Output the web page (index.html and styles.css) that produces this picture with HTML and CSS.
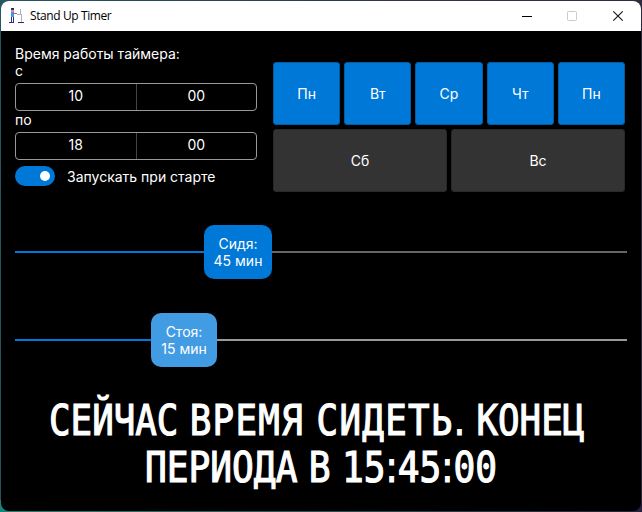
FILE: index.html
```html
<!DOCTYPE html>
<html lang="ru">
<head>
<meta charset="utf-8">
<title>Stand Up Timer</title>
<link rel="stylesheet" href="styles.css">
</head>
<body>
<div class="window">
  <header class="titlebar">
    <svg class="app-icon" width="16" height="17" viewBox="0 0 16 17">
      <path d="M2 1h3v2H2z" fill="#30304f"/><path d="M2 3h3v2H2z" fill="#d98f96"/>
      <path d="M2 5h3v5H2z" fill="#329ce8"/><path d="M4 6.500h4" stroke="#e04a62"/>
      <path d="M2.500 10v5M4.500 10v5" stroke="#302a87"/><path d="M0 15.500h5M9 15.500h6" stroke="#302a70"/>
      <path d="M11.500 2v5M8 7.500h5M12.500 7v8" stroke="#aeb0c4" fill="none"/>
    </svg>
    <span class="title">Stand Up Timer</span>
    <svg class="controls" width="104" height="12" viewBox="0 0 104 12">
      <path d="M0 6.500h10" stroke="#000"/>
      <rect x="45.500" y="1.500" width="9" height="9" rx=".8" fill="none" stroke="#ccc"/>
      <path d="M91.300 1.300l9.400 9.400M100.700 1.300l-9.400 9.400" stroke="#111" stroke-width="1.1"/>
    </svg>
  </header>
  <main class="content">
    <div class="settings">
      <section class="schedule">
        <div class="label">Время работы таймера:</div>
        <div class="label">с</div>
        <div class="time"><span>10</span><span>00</span></div>
        <div class="label until">по</div>
        <div class="time"><span>18</span><span>00</span></div>
        <div class="autostart"><span class="switch"><i></i></span><span>Запускать при старте</span></div>
      </section>
      <section class="days">
        <div class="row"><button class="on">Пн</button><button class="on">Вт</button><button class="on">Ср</button><button class="on">Чт</button><button class="on">Пн</button></div>
        <div class="row"><button>Сб</button><button>Вс</button></div>
      </section>
    </div>
    <div class="slider sit"><span class="fill"></span><div class="thumb">Сидя:<br>45 мин</div><span class="rest"></span></div>
    <div class="slider stand"><span class="fill"></span><div class="thumb">Стоя:<br>15 мин</div><span class="rest"></span></div>
    <div class="status">
      <div class="line first">СЕЙЧАС <span class="wide">ВРЕМЯ СИДЕТЬ</span><span class="colon">.</span> КОНЕЦ</div>
      <div class="line second">ПЕРИОДА В 15<span class="colon">:</span>45<span class="colon">:</span>00</div>
    </div>
  </main>
</div>
</body>
</html>
```
FILE: styles.css
```css
* { box-sizing: border-box; }
body {
  margin: 0;
  height: 512px;
  padding: 1px;
  overflow: hidden;
  background:
    linear-gradient(90deg, #168579, #29203f) bottom / 100% 12px no-repeat,
    linear-gradient(100deg, #245865, #303248 60%, #30273d);
  font: 14px/17px Inter, sans-serif;
  color: #fff;
}
.window { height: 510px; border-radius: 8px; overflow: hidden; background: #000; }
.titlebar { height: 30px; display: flex; align-items: center; padding: 0 15px 0 8px; background: #fff; color: #000; }
.app-icon { margin-top: -1px; }
.title { margin-left: 5px; font: 12px/16px "Open Sans", sans-serif; letter-spacing: -.4px; }
.controls { margin-left: auto; }
.content { padding: 14px 14px 0; }
.settings { display: flex; gap: 16px; height: 151px; }
.schedule { width: 242px; }
.label { height: 17px; }
.time { display: flex; height: 28px; margin-top: 4px; border: 1px solid #999; border-radius: 4px; line-height: 24px; text-align: center; }
.time span { flex: 1; }
.time span + span { border-left: 1px solid #444; }
.autostart { display: flex; align-items: center; gap: 12px; height: 20px; margin-top: 6px; }
.switch { display: flex; align-items: center; justify-content: flex-end; width: 40px; height: 20px; padding-right: 5px; border-radius: 10px; background: #0078d7; }
.switch i { width: 10px; height: 10px; border-radius: 50%; background: #fff; }
.days { width: 352px; padding-top: 17px; display: grid; grid-template-rows: 63px 63px; gap: 4px; }
.row { display: flex; gap: 4px; }
.row button { flex: 1; padding: 0; border: 1px solid #292929; border-radius: 3px; background: #333; color: #fff; font: inherit; }
.row .on { background: #0078d7; border-color: #055ba0; }
.slider { display: flex; align-items: center; height: 54px; }
.sit { margin-top: 29px; }
.stand { margin-top: 34px; }
.fill { width: 189px; height: 2px; background: #0078d7; }
.stand .fill { width: 136px; }
.rest { flex: 1; height: 2px; background: #666; }
.stand .rest { background: #999; }
.thumb { width: 68px; height: 54px; padding-top: 10px; border-radius: 10px; background: #0078d7; text-align: center; white-space: nowrap; }
.stand .thumb { width: 66px; background: #429ce3; }
.status { margin-top: 30px; font: 42px/47px "DejaVu Sans Mono", monospace; -webkit-text-stroke: 1.2px #fff; }
.line { height: 47px; width: max-content; white-space: nowrap; transform-origin: left; word-spacing: -12px; }
.first { margin-left: 34px; transform: scaleX(.853); }
.wide { letter-spacing: 1.5px; }
.second { margin-left: 130px; transform: scaleX(.861); }
.colon { font-family: "DejaVu Sans", sans-serif; }
```
